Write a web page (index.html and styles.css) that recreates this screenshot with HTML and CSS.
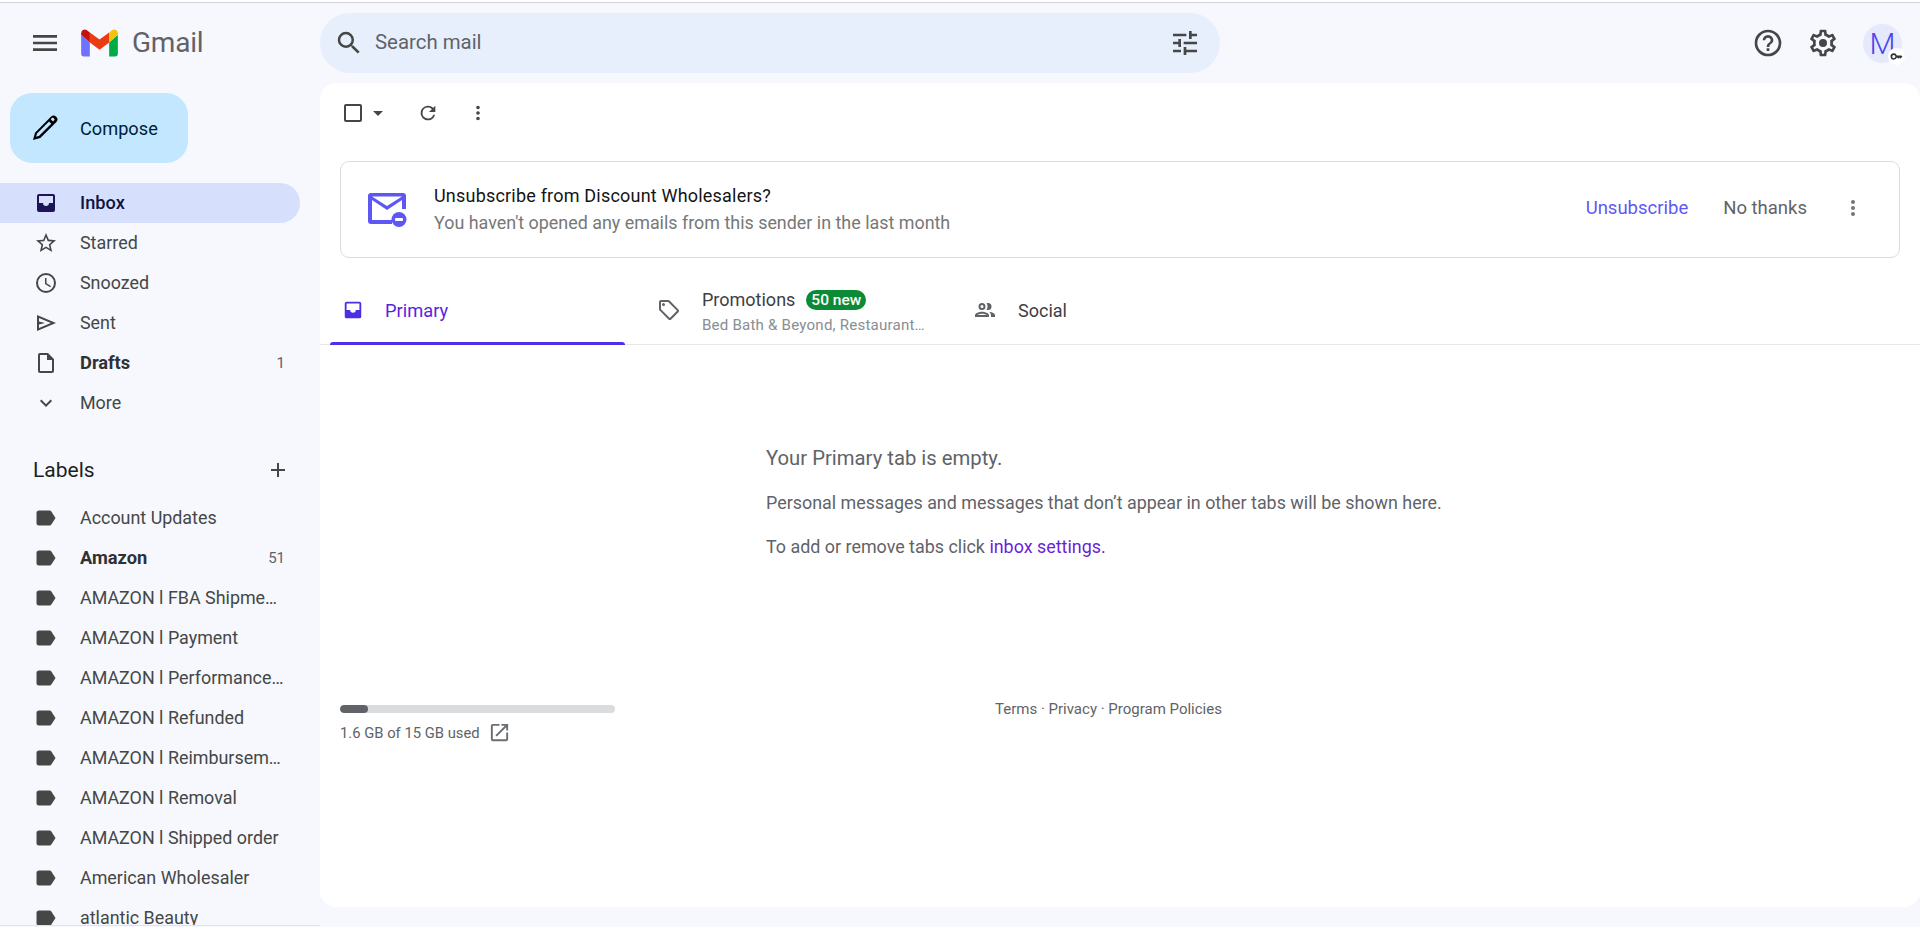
FILE: index.html
```html
<!DOCTYPE html>
<html lang="en">
<head>
<meta charset="utf-8">
<title>Gmail</title>
<link rel="stylesheet" href="styles.css">
</head>
<body>
<div class="strip"></div>
<div class="app">
  <aside class="side">
    <div class="brand">
      <svg class="ic menu" viewBox="0 0 24 24"><path d="M3 18h18v-2H3v2zm0-5h18v-2H3v2zm0-7v2h18V6H3z"/></svg>
      <svg class="logo" viewBox="0 0 38 29">
        <path fill="#6f72ff" d="M0 6v20a2.500 2.500 0 0 0 2.500 2.500H9V14z"/>
        <path fill="#00ac47" d="M29 14v14.500h6.500A2.500 2.500 0 0 0 38 26V6z"/>
        <path fill="#ea3b12" d="M9 14 19 21.500 29 14V3.500L19 11 9 3.500z"/>
        <path fill="#c5130c" d="M0 6 9 14V3.500L6 1.200C3.500-.6 0 1.200 0 4.300z"/>
        <path fill="#f4c20d" d="M38 6 29 14V3.500l3-2.300C34.500-.6 38 1.200 38 4.300z"/>
      </svg>
      <span class="word">Gmail</span>
    </div>
    <button class="compose">
      <svg class="ic pen" viewBox="0 0 24 24"><path d="M20.400 3.600a2.800 2.800 0 0 0-4 0L4.500 15.500 3 21l5.500-1.500L20.400 7.600a2.800 2.800 0 0 0 0-4zM7.600 17.800l-2.300.7.700-2.300L15 7.200l1.700 1.700zM18.900 6.200l-.9.900L16.300 5.400l.9-.9a.8.8 0 0 1 1.200 0l.5.500a.8.800 0 0 1 0 1.200z"/></svg>
      <span>Compose</span>
    </button>
    <nav class="nav">
      <a class="row on"><svg class="ic" viewBox="0 0 24 24"><path d="M19 3H5a2 2 0 0 0-2 2v14a2 2 0 0 0 2 2h14a2 2 0 0 0 2-2V5a2 2 0 0 0-2-2zm0 9h-4a3 3 0 0 1-6 0H5V5h14z"/></svg><span class="t">Inbox</span></a>
      <a class="row"><svg class="ic" viewBox="0 0 24 24"><path d="m22 9.240-7.190-.62L12 2 9.190 8.630 2 9.240l5.460 4.730L5.820 21 12 17.270 18.180 21l-1.630-7.030zM12 15.400l-3.760 2.270 1-4.280-3.320-2.880 4.380-.38L12 6.100l1.710 4.040 4.380.38-3.320 2.880 1 4.280z"/></svg><span class="t">Starred</span></a>
      <a class="row"><svg class="ic" viewBox="0 0 24 24"><path d="M12 2a10 10 0 1 0 0 20 10 10 0 0 0 0-20zm0 18a8 8 0 1 1 0-16 8 8 0 0 1 0 16zm.5-13H11v6l5.200 3.200.8-1.300-4.500-2.700z"/></svg><span class="t">Snoozed</span></a>
      <a class="row"><svg class="ic" viewBox="0 0 24 24"><path d="M3 20V4l19 8zm2-3 11.850-5L5 7v3.500l6 1.500-6 1.500z"/></svg><span class="t">Sent</span></a>
      <a class="row b"><svg class="ic" viewBox="0 0 24 24"><path d="M14 2H6a2 2 0 0 0-2 2v16a2 2 0 0 0 2 2h12a2 2 0 0 0 2-2V8zm4 18H6V4h7v5h5z"/></svg><span class="t">Drafts</span><span class="n">1</span></a>
      <a class="row"><svg class="ic" viewBox="0 0 24 24"><path d="M16.590 8.590 12 13.170 7.410 8.590 6 10l6 6 6-6z"/></svg><span class="t">More</span></a>
    </nav>
    <div class="lab-h">
      <span>Labels</span>
      <svg class="ic" viewBox="0 0 24 24"><path d="M19 13h-6v6h-2v-6H5v-2h6V5h2v6h6z"/></svg>
    </div>
    <nav class="nav">
      <a class="row"><svg class="ic" viewBox="0 0 24 24"><use href="#tag"/></svg><span class="t">Account Updates</span></a>
      <a class="row b"><svg class="ic" viewBox="0 0 24 24"><use href="#tag"/></svg><span class="t">Amazon</span><span class="n">51</span></a>
      <a class="row"><svg class="ic" viewBox="0 0 24 24"><use href="#tag"/></svg><span class="t">AMAZON l FBA Shipments</span></a>
      <a class="row"><svg class="ic" viewBox="0 0 24 24"><use href="#tag"/></svg><span class="t">AMAZON l Payment</span></a>
      <a class="row"><svg class="ic" viewBox="0 0 24 24"><use href="#tag"/></svg><span class="t">AMAZON l Performance Notifications</span></a>
      <a class="row"><svg class="ic" viewBox="0 0 24 24"><use href="#tag"/></svg><span class="t">AMAZON l Refunded</span></a>
      <a class="row"><svg class="ic" viewBox="0 0 24 24"><use href="#tag"/></svg><span class="t">AMAZON l Reimbursements</span></a>
      <a class="row"><svg class="ic" viewBox="0 0 24 24"><use href="#tag"/></svg><span class="t">AMAZON l Removal</span></a>
      <a class="row"><svg class="ic" viewBox="0 0 24 24"><use href="#tag"/></svg><span class="t">AMAZON l Shipped order</span></a>
      <a class="row"><svg class="ic" viewBox="0 0 24 24"><use href="#tag"/></svg><span class="t">American Wholesaler</span></a>
      <a class="row"><svg class="ic" viewBox="0 0 24 24"><use href="#tag"/></svg><span class="t">atlantic Beauty</span></a>
    </nav>
  </aside>
  <div class="right">
    <header class="top">
      <div class="search">
        <svg class="ic glass" viewBox="0 0 24 24"><path d="M15.500 14h-.79l-.28-.27A6.470 6.470 0 0 0 16 9.500 6.500 6.500 0 1 0 9.500 16c1.610 0 3.090-.59 4.230-1.570l.27.28v.79l5 4.990L20.490 19zm-6 0a4.500 4.500 0 1 1 0-9 4.500 4.500 0 0 1 0 9z"/></svg>
        <span class="ph">Search mail</span>
        <svg class="ic tune" viewBox="0 0 24 24"><path d="M3 17v2h6v-2zM3 5v2h10V5zm10 16v-2h8v-2h-8v-2h-2v6zM7 9v2H3v2h4v2h2V9zm14 4v-2H11v2zm-6-4h2V7h4V5h-4V3h-2z"/></svg>
      </div>
      <div class="tools">
        <svg class="ic" viewBox="0 0 24 24"><path d="M11 18h2v-2h-2zm1-16a10 10 0 1 0 0 20 10 10 0 0 0 0-20zm0 18a8 8 0 1 1 0-16 8 8 0 0 1 0 16zm0-14a4 4 0 0 0-4 4h2a2 2 0 1 1 4 0c0 2-3 1.750-3 5h2c0-2.250 3-2.500 3-5a4 4 0 0 0-4-4z"/></svg>
        <svg class="ic" viewBox="0 0 24 24"><path d="M19.430 12.980c.04-.32.07-.64.07-.98 0-.34-.03-.66-.07-.98l2.110-1.650c.19-.15.24-.42.12-.64l-2-3.460c-.09-.16-.26-.25-.44-.25-.06 0-.12.01-.17.03l-2.490 1c-.52-.4-1.080-.73-1.690-.98l-.38-2.650C14.460 2.180 14.250 2 14 2h-4c-.25 0-.46.18-.49.42l-.38 2.650c-.61.25-1.170.59-1.690.98l-2.490-1c-.06-.02-.12-.03-.18-.03-.17 0-.34.09-.43.25l-2 3.460c-.13.22-.07.49.12.64l2.110 1.650c-.04.32-.07.65-.07.98 0 .33.03.66.07.98l-2.110 1.650c-.19.15-.24.42-.12.64l2 3.460c.09.16.26.25.44.25.06 0 .12-.01.17-.03l2.490-1c.52.4 1.080.73 1.690.98l.38 2.650c.03.24.24.42.49.42h4c.25 0 .46-.18.49-.42l.38-2.650c.61-.25 1.170-.59 1.690-.98l2.490 1c.06.02.12.03.18.03.17 0 .34-.09.43-.25l2-3.460c.12-.22.07-.49-.12-.64l-2.110-1.650zm-1.980-1.710c.04.31.05.52.05.73 0 .21-.02.43-.05.73l-.14 1.130.89.7 1.080.84-.7 1.210-1.270-.51-1.040-.42-.9.68c-.43.32-.84.56-1.250.73l-1.060.43-.16 1.130-.2 1.350h-1.400l-.19-1.350-.16-1.130-1.060-.43c-.43-.18-.83-.41-1.230-.71l-.91-.7-1.060.43-1.270.51-.7-1.210 1.080-.84.89-.7-.14-1.130c-.03-.31-.05-.54-.05-.74s.02-.43.05-.73l.14-1.130-.89-.7-1.080-.84.7-1.210 1.270.51 1.040.42.9-.68c.43-.32.84-.56 1.250-.73l1.060-.43.16-1.130.2-1.350h1.390l.19 1.350.16 1.130 1.060.43c.43.18.83.41 1.230.71l.91.7 1.060-.43 1.270-.51.7 1.210-1.070.85-.89.7.14 1.130zM12 9a3 3 0 1 0 0 6 3 3 0 0 0 0-6z"/></svg>
        <div class="avatar">M
          <span class="key"><svg viewBox="0 0 24 24"><path d="M21 10h-8.350A6 6 0 1 0 7 18a6 6 0 0 0 5.650-4H13l2 2 2-2 2 2 4-4zM7 15a3 3 0 1 1 0-6 3 3 0 0 1 0 6z"/></svg></span>
        </div>
      </div>
    </header>
    <main class="panel">
      <div class="bar">
        <svg class="ic" viewBox="0 0 24 24"><path d="M19 5v14H5V5zm0-2H5a2 2 0 0 0-2 2v14a2 2 0 0 0 2 2h14a2 2 0 0 0 2-2V5a2 2 0 0 0-2-2z"/></svg>
        <svg class="ic caret" viewBox="0 0 24 24"><path d="m7 10 5 5 5-5z"/></svg>
        <svg class="ic sm refresh" viewBox="0 0 24 24"><path d="M17.650 6.350A8 8 0 1 0 19.740 14h-2.080A6 6 0 1 1 12 6c1.660 0 3.140.69 4.220 1.780L13 11h7V4z"/></svg>
        <svg class="ic sm dots" viewBox="0 0 24 24"><path d="M12 8a2 2 0 1 0 0-4 2 2 0 0 0 0 4zm0 2a2 2 0 1 0 0 4 2 2 0 0 0 0-4zm0 6a2 2 0 1 0 0 4 2 2 0 0 0 0-4z"/></svg>
      </div>
      <section class="unsub">
        <svg class="unsub-ic" viewBox="0 0 40 34"><path fill="#5f57f5" d="M4 0h32a3 3 0 0 1 3 3v13h-4V7L20 17 5 7v20h20v4H4a3 3 0 0 1-3-3V3a3 3 0 0 1 3-3zm1 3.500L20 13 35 3.500z" fill-rule="evenodd"/><circle cx="32" cy="26.500" r="7.500" fill="#5f57f5"/><rect x="28" y="25" width="8" height="3" rx="1" fill="#fff"/></svg>
        <div class="unsub-t">
          <div class="u1">Unsubscribe from Discount Wholesalers?</div>
          <div class="u2">You haven't opened any emails from this sender in the last month</div>
        </div>
        <a class="act pri">Unsubscribe</a>
        <a class="act">No thanks</a>
        <svg class="ic more" viewBox="0 0 24 24"><path fill="#70757a" d="M12 8a2 2 0 1 0 0-4 2 2 0 0 0 0 4zm0 2a2 2 0 1 0 0 4 2 2 0 0 0 0-4zm0 6a2 2 0 1 0 0 4 2 2 0 0 0 0-4z"/></svg>
      </section>
      <div class="tabs">
        <div class="tab active">
          <svg class="ic" viewBox="0 0 24 24"><path d="M19 3H5a2 2 0 0 0-2 2v14a2 2 0 0 0 2 2h14a2 2 0 0 0 2-2V5a2 2 0 0 0-2-2zm0 9h-4a3 3 0 0 1-6 0H5V5h14z"/></svg>
          <span>Primary</span>
        </div>
        <div class="tab promo">
          <svg class="ic" viewBox="0 0 24 24"><path d="m21.410 11.410-8.830-8.830A2 2 0 0 0 11.170 2H4a2 2 0 0 0-2 2v7.170a2 2 0 0 0 .59 1.410l8.830 8.830a2 2 0 0 0 2.830 0l7.170-7.170a2 2 0 0 0 0-2.830zM12.830 20 4 11.170V4h7.170L20 12.830zM6.500 5A1.500 1.500 0 1 1 6.500 8a1.500 1.500 0 0 1 0-3z"/></svg>
          <div class="promo-t">
            <div class="p1"><span>Promotions</span><span class="badge">50 new</span></div>
            <div class="p2">Bed Bath &amp; Beyond, Restaurant…</div>
          </div>
        </div>
        <div class="tab social">
          <svg class="ic" viewBox="0 0 24 24"><path d="M9 13.750c-2.340 0-7 1.170-7 3.500V19h14v-1.750c0-2.330-4.660-3.500-7-3.500zM4.340 17c.84-.58 2.870-1.250 4.660-1.250s3.820.67 4.660 1.250zM9 12a3.500 3.500 0 1 0 0-7 3.500 3.500 0 0 0 0 7zm0-5a1.500 1.500 0 1 1 0 3 1.500 1.500 0 0 1 0-3zm7.040 6.810c1.160.84 1.960 1.960 1.960 3.440V19h4v-1.750c0-2.020-3.500-3.170-5.960-3.440zM15 12a3.500 3.500 0 0 0 0-7c-.54 0-1.040.13-1.500.35a5.500 5.500 0 0 1 0 6.300c.46.220.96.350 1.500.35z"/></svg>
          <span>Social</span>
        </div>
      </div>
      <section class="empty">
        <h2>Your Primary tab is empty.</h2>
        <p>Personal messages and messages that don’t appear in other tabs will be shown here.</p>
        <p>To add or remove tabs click <a>inbox settings.</a></p>
      </section>
      <footer class="foot">
        <div class="store">
          <div class="track"><div class="fill"></div></div>
          <div class="used"><span>1.6 GB of 15 GB used</span>
            <svg class="ic" viewBox="0 0 24 24"><path d="M19 19H5V5h7V3H5a2 2 0 0 0-2 2v14a2 2 0 0 0 2 2h14a2 2 0 0 0 2-2v-7h-2zM14 3v2h3.590l-9.830 9.830 1.410 1.410L19 6.410V10h2V3z"/></svg>
          </div>
        </div>
        <div class="terms">Terms · Privacy · Program Policies</div>
      </footer>
    </main>
  </div>
</div>
<svg class="defs" aria-hidden="true"><symbol id="tag" viewBox="0 0 24 24"><path d="M5 4.500h10.500c.7 0 1.300.3 1.700.8L21.500 12l-4.300 6.700c-.4.500-1 .8-1.700.8H5A2.500 2.500 0 0 1 2.500 17V7A2.500 2.500 0 0 1 5 4.500z"/></symbol></svg>
</body>
</html>
```
FILE: styles.css
```css
* { box-sizing: border-box; }
html, body { margin: 0; height: 100%; overflow: hidden; }
body { background: #f6f8fd; font-family: Roboto, "Liberation Sans", sans-serif; color: #444746; }
.strip { height: 3px; background: #fff; border-bottom: 1px solid #d0d2d6; }
.defs { width: 0; height: 0; position: absolute; }
.ic { width: 24px; height: 24px; fill: #444746; flex: none; display: block; }
.app { display: flex; height: 924px; }
.side { width: 320px; height: 923px; flex: none; overflow: hidden; border-bottom: 1px solid #e2e3e6; }
.brand { display: flex; align-items: center; height: 70px; padding: 9px 0 0 29px; }
.menu { width: 32px; height: 32px; }
.logo { width: 37px; height: 28px; margin-left: 20px; flex: none; }
.word { font-size: 28px; color: #5f6368; margin-left: 14px; letter-spacing: -.2px; }
.compose { display: flex; align-items: center; width: 178px; height: 70px; margin: 20px 0 20px 10px; padding: 0 0 0 19px; border: 0; border-radius: 22px; background: #c2e7ff; color: #001d35; font: 400 18.200px Roboto, sans-serif; }
.pen { fill: #000; width: 32px; height: 32px; }
.compose span { margin-left: 19px; }
.nav { display: flex; flex-direction: column; }
.row { display: flex; align-items: center; width: 300px; height: 40px; padding: 0 15px 0 34px; border-radius: 0 20px 20px 0; font-size: 17.900px; color: #444746; }
.row .t { margin-left: 22px; padding-bottom: 2px; flex: 1; max-width: 205px; white-space: nowrap; overflow: hidden; text-overflow: ellipsis; }
.row .n { font-size: 15px; font-weight: 400; margin-left: 8px; color: #5f6368; }
.row.b { font-weight: 700; color: #303134; font-size: 18.300px; }
.row.on { background: #d6dffc; font-weight: 500; color: #0f1440; font-size: 18.200px; }
.row.on .ic { fill: #1d1458; }
.lab-h { display: flex; align-items: center; justify-content: space-between; width: 300px; height: 40px; margin-top: 27px; padding: 0 10px 0 33px; font-size: 21px; color: #1f1f1f; }
.lab-h + .nav { margin-top: 8px; }
.right { flex: 1; display: flex; flex-direction: column; min-width: 0; }
.top { display: flex; align-items: center; justify-content: space-between; height: 80px; flex: none; }
.search { display: flex; align-items: center; width: 900px; height: 60px; padding: 0 19px 0 14px; background: #e8effc; border-radius: 30px; }
.glass { width: 30px; height: 30px; }
.tune { width: 32px; height: 32px; }
.ph { flex: 1; margin-left: 11px; padding-bottom: 2px; font-size: 20.400px; color: #5f6368; }
.tools { display: flex; align-items: center; gap: 23px; padding-right: 18px; }
.tools .ic { width: 32px; height: 32px; }
.avatar { position: relative; width: 39px; height: 39px; margin-left: 1px; border-radius: 50%; background: #e6e9fb; color: #4d44f0; font-size: 30px; font-weight: 300; text-align: center; line-height: 39px; }
.key { position: absolute; right: -3px; bottom: -2px; width: 17px; height: 17px; border-radius: 50%; background: #fff; display: flex; align-items: center; justify-content: center; }
.key svg { width: 13px; height: 13px; fill: #333; }
.panel { flex: none; height: 824px; background: #fff; border-radius: 16px; position: relative; }
.bar { display: flex; align-items: center; height: 59px; padding: 0 0 0 21px; }
.caret { margin-left: 1px; }
.sm { width: 22px; height: 22px; }
.refresh { margin-left: 27px; }
.dots { margin-left: 28px; }
.unsub { display: flex; align-items: center; height: 97px; margin: 19px 20px 0 20px; padding: 0 34px 0 26px; border: 1px solid #dadce0; border-radius: 9px; }
.unsub-ic { width: 40px; height: 34px; flex: none; }
.unsub-t { flex: 1; margin-left: 27px; }
.u1 { font-size: 18px; color: #141414; line-height: 26px; letter-spacing: .2px; }
.u2 { font-size: 17.900px; color: #777; line-height: 28px; }
.act { font-size: 18.500px; color: #5f6368; margin-right: 35px; margin-bottom: 4px; }
.act.pri { color: #5f57f5; }
.act:not(.pri) { margin-right: 34px; }
.more { margin-bottom: 4px; }
.tabs { display: flex; height: 87px; padding-left: 10px; border-bottom: 1px solid #e8e8e8; align-items: stretch; }
.tab { display: flex; align-items: center; padding-top: 18px; font-size: 18px; color: #3c4043; position: relative; }
.tab.active { width: 295px; padding-left: 12px; color: #5a1fe0; }
.tab.active .ic { fill: #4d2fe3; width: 22px; height: 22px; }
.tab.active span { margin-left: 21px; font-size: 18.300px; }
.tab.active::after { content: ""; position: absolute; left: 0; right: 0; bottom: -1px; height: 3px; background: #4f2ee5; border-radius: 3px 3px 0 0; }
.promo { width: 348px; padding-left: 32px; }
.promo .ic, .social .ic { fill: #5f6368; }
.promo-t { margin-left: 21px; padding-top: 4px; }
.p1 { display: flex; align-items: center; font-size: 18px; line-height: 20px; }
.badge { margin-left: 11px; padding: 0 5px; height: 20px; line-height: 20px; border-radius: 10px; background: #0b8b36; color: #fff; font-size: 15.500px; font-weight: 500; }
.p2 { font-size: 15.100px; color: #8a8d91; line-height: 20px; margin-top: 5px; letter-spacing: .2px; }
.social span { margin-left: 21px; }
.empty { margin: 101px 0 0 446px; color: #5f6368; }
.empty h2 { margin: 0; font-size: 20.300px; font-weight: 400; line-height: 24px; }
.empty p { margin: 21px 0 0; font-size: 17.900px; line-height: 24px; }
.empty p + p { margin-top: 20px; }
.empty a { color: #6a1fd8; }
.foot { display: flex; margin: 146px 0 0 20px; }
.store { width: 275px; }
.track { height: 8px; background: #dadce0; border-radius: 4px; overflow: hidden; }
.fill { width: 28px; height: 100%; background: #5f6368; border-radius: 4px; }
.used { display: flex; align-items: center; gap: 8px; margin-top: 8px; font-size: 14.800px; color: #5f6368; }
.used .ic { fill: #6b6e72; width: 23px; height: 23px; }
.terms { margin-left: 380px; font-size: 15px; color: #5f6368; margin-top: -5px; }
```
